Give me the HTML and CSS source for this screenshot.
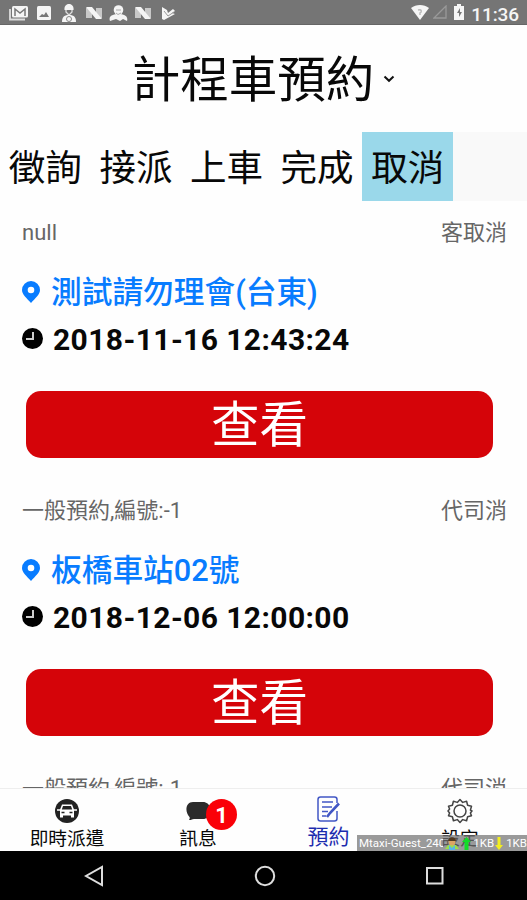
FILE: index.html
```html
<!DOCTYPE html>
<html lang="zh-Hant">
<head>
<meta charset="utf-8">
<title>計程車預約</title>
<link rel="stylesheet" href="styles.css">
</head>
<body>
<svg class="symbols" aria-hidden="true">
  <symbol id="pin" viewBox="0 0 18 23"><path fill-rule="evenodd" d="M9 0a9 9 0 0 0-9 9c0 4.500 5 8.500 9 13 4-4.500 9-8.500 9-13a9 9 0 0 0-9-9zm0 5.700a3.300 3.300 0 1 1 0 6.600 3.300 3.300 0 0 1 0-6.600z"/></symbol>
  <symbol id="clock" viewBox="0 0 21 21"><circle cx="10.500" cy="10.500" r="10.500"/><path d="M11 4v7H4" fill="none" stroke="#ccc" stroke-width="2"/></symbol>
  <symbol id="nougat" viewBox="0 0 16 14"><path d="M0 2h6v10H0zM10 2h6v10h-6z" fill="#c8c8c8"/><path d="M0 1h6l10 12h-6z"/></symbol>
</svg>
<div class="screen">
  <header class="status">
    <div class="notices">
      <svg width="20" height="16" viewBox="0 0 20 16"><path d="M1 4v10.500h15" fill="none" stroke="#ddd" stroke-width="1.800"/><rect x="3" y="1" width="16" height="11.500" rx="1.500"/><path d="M6 11V4l5 4 5-4v7" fill="none" stroke="#777" stroke-width="1.500"/></svg>
      <svg class="gallery" width="14" height="14" viewBox="0 0 14 14"><rect width="14" height="14" rx="1.500"/><path d="M2 11l3-3 2 1 2-3 3 5z" fill="#777"/></svg>
      <svg class="person" width="14" height="18" viewBox="0 0 14 18"><path d="M2.500 6c-1-8 10-8 9 0z"/><path d="M4 6v2l3 3 3-3V6" fill="none" stroke="#ddd" stroke-width="1.300"/><path d="M0 18c0-6 3-7 7-7s7 1 7 7z"/><circle cx="7" cy="15" r="2.500" fill="none" stroke="#888"/></svg>
      <svg class="nougat" width="16" height="14"><use href="#nougat"/></svg>
      <svg class="guard" width="19" height="17" viewBox="0 0 19 17"><circle cx="9.500" cy="5" r="4.800"/><path d="M1 16c-2-5 3-7 8.500-7s10 2 8.500 7l-4-2-3 2-4-2z"/><path d="M7 5h5M7 8l2 1.500L12 8" fill="none" stroke="#aaa"/></svg>
      <svg class="nougat" width="16" height="14"><use href="#nougat"/></svg>
      <svg class="check" width="14" height="15" viewBox="0 0 14 15"><path d="M1 1l5 3 1 3 5-4 2 2-3 2 3 1L3 14l-2-1z"/><path d="M3 5l4 5 6-4" fill="none" stroke="#999"/></svg>
    </div>
    <div class="signals">
      <svg width="18" height="15" viewBox="0 0 18 15"><path d="M0 3c5-4 13-4 18 0L9 15z"/><path d="M7 5c4-1 4 2 2 3v2" fill="none" stroke="#bbb" stroke-width="1.500"/></svg>
      <svg class="cell" width="14" height="14" viewBox="0 0 14 14"><path d="M13 1v12H1z" fill="none" stroke="#999" stroke-width="1.300"/></svg>
      <svg class="battery" width="10" height="16" viewBox="0 0 10 16"><path d="M3 0h4v2h3v14H0V2h3z"/><path d="M6 4L3 9h2v4l3-5H6z" fill="#777"/></svg>
      <span class="time">11:36</span>
    </div>
  </header>

  <h1 class="title"><span>計程車預約</span><svg width="12" height="8" viewBox="0 0 12 8"><path d="M1.500 1.500L6 5.800l4.500-4.300" fill="none" stroke="#111" stroke-width="2"/></svg></h1>

  <nav class="filters">
    <a class="filter">徵詢</a><a class="filter">接派</a><a class="filter">上車</a><a class="filter">完成</a><a class="filter active">取消</a>
  </nav>

  <main class="bookings">
    <article class="booking">
      <div class="meta"><span>null</span><span>客取消</span></div>
      <div class="place"><svg width="18" height="23"><use href="#pin"/></svg><span>測試請勿理會(台東)</span></div>
      <div class="when"><svg width="21" height="21"><use href="#clock"/></svg><span>2018-11-16 12:43:24</span></div>
      <button class="view">查看</button>
    </article>
    <article class="booking">
      <div class="meta"><span>一般預約,編號:-1</span><span>代司消</span></div>
      <div class="place"><svg width="18" height="23"><use href="#pin"/></svg><span>板橋車站02號</span></div>
      <div class="when"><svg width="21" height="21"><use href="#clock"/></svg><span>2018-12-06 12:00:00</span></div>
      <button class="view">查看</button>
    </article>
    <article class="booking">
      <div class="meta"><span>一般預約,編號:-1</span><span>代司消</span></div>
    </article>
  </main>

  <footer class="tabs">
    <a class="tab">
      <svg width="26" height="26" viewBox="0 0 26 26"><circle cx="13" cy="13" r="12" fill="#222"/><path d="M8 6.500h10l2 5v8h-3v-2H9v2H6v-8z" fill="#fff"/><path d="M9 8h8l1.200 3.500H7.800z" fill="#222"/><path d="M7.500 14.500h3m5 0h3" stroke="#222" stroke-width="1.500"/><path d="M3 12h3m14 0h3" stroke="#fff" stroke-width="1.500"/></svg>
      <span>即時派遣</span>
    </a>
    <a class="tab">
      <span class="chat"><svg width="24" height="26" viewBox="0 0 24 26"><path d="M7 4h10c10 0 10 17 0 17H8c-2 0-3 1.500-5 1 .7-1 1-2 .5-3C-1.500 14-.5 4 7 4z" fill="#2b2b2b"/></svg><b class="badge">1</b></span>
      <span>訊息</span>
    </a>
    <a class="tab current">
      <svg width="24" height="26" viewBox="0 0 24 26"><g fill="none" stroke="#4257c5" stroke-width="1.500"><path d="M20 7V3.500Q20 1 17.500 1h-14Q1 1 1 3.500v19Q1 25 3.500 25h14q2.500 0 2.500-2.500V15M5 6h11M5 11h10M5 15.500h6M5 20h4"/><path d="M22 7.500L13 17l-3 4" stroke-width="2.600"/></g></svg>
      <span>預約</span>
    </a>
    <a class="tab">
      <svg width="26" height="26" viewBox="0 0 26 26"><g fill="none" stroke="#444" stroke-width="1.500" stroke-linejoin="round"><path d="M13 1.500l2.700 2.900 3.900-1.100 1 4 3.900 1-1.100 3.800L25 13l-1.600 1.900 1.100 2.800-3.900 1-1 4-3.900-1.100L13 24.500l-2.700-2.900-3.900 1.100-1-4-3.900-1 1.100-2.800L1 13l1.600-1.900-1.100-2.800 3.900-1 1-4 3.900 1.100z"/><circle cx="13" cy="13" r="6"/></g></svg>
      <span>設定</span>
    </a>
    <div class="traffic">
      <span class="net">Mtaxi-Guest_240</span>
      <svg class="user" width="14" height="13" viewBox="0 0 14 13"><path d="M0 12L3 8h8l3 4z" fill="#9be04a"/><path d="M4 8l3 3 3-3v5H4z" fill="#58b5e8"/><circle cx="7" cy="5" r="3.500" fill="#dca564"/><path d="M3 4c0-5 8-5 8 0z" fill="#533b20"/></svg>
      <svg class="up" width="9" height="13" viewBox="0 0 9 13"><path d="M4.500 0L9 5H6.500v8h-4V5H0z" fill="#12dc28"/></svg>
      <span>1KB</span>
      <svg class="down" width="8" height="13" viewBox="0 0 8 13"><path d="M4 13L0 8h2.500V0h3v8H8z" fill="#f2ee20"/></svg>
      <span>1KB</span>
    </div>
  </footer>

  <div class="navigation">
    <svg width="20" height="22" viewBox="0 0 20 22"><path d="M18 2v18L2 11z"/></svg>
    <svg width="22" height="22" viewBox="0 0 22 22"><circle cx="11" cy="11" r="9.200"/></svg>
    <svg width="20" height="20" viewBox="0 0 20 20"><rect x="2" y="2" width="15.500" height="15.500"/></svg>
  </div>
</div>
</body>
</html>
```

FILE: styles.css
```css
* { box-sizing: border-box; }

body {
  margin: 0;
  background: #fefefe;
  color: #080808;
  font-family: Roboto, "Noto Sans CJK TC", sans-serif;
}

svg { display: block; flex: none; }
.symbols { display: none; }

.screen {
  display: flex;
  flex-direction: column;
  width: 527px;
  height: 900px;
  overflow: hidden;
}

.status {
  display: flex;
  flex: none;
  justify-content: space-between;
  height: 25px;
  padding: 0 8px 0 9px;
  background: #757575;
  border-bottom: 1px solid #666;
  color: #f5f5f5;
  fill: #f5f5f5;
}
.notices, .signals { display: flex; align-items: center; }
.notices { padding-top: 2px; }
.gallery { margin-left: 8px; }
.person { margin-left: 11px; }
.nougat { margin-left: 10px; }
.guard { margin-left: 7px; }
.guard + .nougat { margin-left: 7px; }
.check { margin-left: 10px; }
.cell { margin-left: 4px; }
.battery { margin-left: 7px; }
.time { margin: 4px 0 0 7px; font-size: 19px; font-weight: 500; letter-spacing: -.1px; }

.title {
  display: flex;
  flex: none;
  align-items: center;
  justify-content: center;
  gap: 9px;
  height: 107px;
  margin: 0;
  font-size: 48.500px;
  font-weight: 400;
  line-height: 107px;
}
.title span { padding-top: 3px; }

.filters {
  display: flex;
  flex: none;
  height: 69px;
  background: #f9f9f9;
}
.filter {
  width: 90.600px;
  padding-top: 2px;
  background: #fefefe;
  font-size: 36.500px;
  line-height: 69px;
  text-align: center;
  white-space: nowrap;
}
.filter.active { background: #9ad8ea; }

.bookings { flex: 1; min-height: 0; overflow: hidden; }
.booking { height: 278px; padding: 16px 20px 0 22px; }
.meta {
  display: flex;
  justify-content: space-between;
  height: 32px;
  color: #666;
  font-size: 22px;
  font-weight: 400;
  line-height: 32px;
}
.place, .when { display: flex; align-items: center; }
.place {
  gap: 11px;
  height: 44px;
  margin-top: 22px;
  color: #087cff;
  fill: #087cff;
  font-size: 30.700px;
  font-weight: 500;
  line-height: 46px;
}
.when {
  gap: 10px;
  height: 44px;
  margin-top: 3px;
  font-size: 30px;
  font-weight: 700;
  letter-spacing: .4px;
  line-height: 44px;
}
.place svg { margin-bottom: 1px; }
.when svg { margin-bottom: 3px; }
.view {
  display: block;
  width: 467px;
  height: 67px;
  margin: 29px 0 0 4px;
  padding: 2px 0 0;
  border: 0;
  border-radius: 15px;
  background: #d50409;
  color: #fff;
  font: 400 48.500px/65px Roboto, "Noto Sans CJK TC", sans-serif;
}

.tabs {
  position: relative;
  display: grid;
  flex: none;
  grid-template-columns: 134px 128px 133px 130px;
  height: 63px;
  border-top: 1px solid #eee;
  background: #fefefe;
}
.tab {
  display: flex;
  flex-direction: column;
  align-items: center;
  padding-top: 9px;
  font-size: 18.700px;
  line-height: 30px;
}
.current { padding-top: 7px; color: #1d2cae; font-size: 21px; }
.chat { position: relative; }
.badge {
  position: absolute;
  top: 1px;
  left: 20px;
  width: 31px;
  height: 31px;
  border-radius: 50%;
  background: #fa0008;
  color: #fff;
  font-size: 22px;
  line-height: 33px;
  text-align: center;
}
.traffic {
  position: absolute;
  right: 0;
  bottom: 0;
  display: flex;
  align-items: center;
  width: 170px;
  height: 16px;
  padding-left: 2px;
  background: rgba(115, 115, 115, .72);
  color: #fff;
  font-size: 11.500px;
  line-height: 16px;
  white-space: nowrap;
}
.net { width: 86px; overflow: hidden; }
.user { margin-left: 2px; }
.up { margin: 0 2px 0 3px; }
.down { margin: 0 3px 0 1px; }

.navigation {
  display: flex;
  flex: none;
  align-items: center;
  justify-content: space-between;
  height: 49px;
  padding: 0 82px 0 84px;
  background: #000;
  fill: none;
  stroke: #ddd;
  stroke-width: 2;
}
```
